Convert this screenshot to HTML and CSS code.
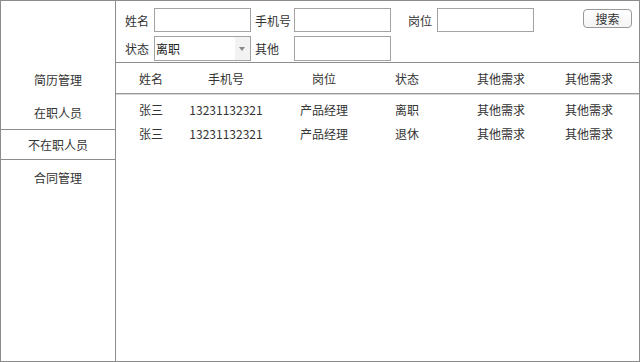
FILE: index.html
```html
<!DOCTYPE html>
<html lang="zh-CN">
<head>
    <meta charset="UTF-8">
    <meta name="viewport" content="width=device-width, initial-scale=1.0">
    <title>不在职人员</title>
    <link rel="stylesheet" href="styles.css">
</head>
<body>

    <div class="app">
        <!-- Side menu -->
        <aside class="sidebar">
            <ul class="menu">
                <li>简历管理</li>
                <li>在职人员</li>
                <li class="active">不在职人员</li>
                <li class="last">合同管理</li>
            </ul>
        </aside>

        <!-- Main area -->
        <main class="content">
            <form class="filters">
                <label class="lbl">姓名</label>
                <input class="field" type="text">
                <label class="lbl lbl-2">手机号</label>
                <input class="field" type="text">
                <label class="lbl lbl-3">岗位</label>
                <input class="field" type="text">
                <button type="button" class="search">搜索</button>

                <label class="lbl">状态</label>
                <div class="select">
                    <span class="select-value">离职</span>
                    <span class="select-arrow"></span>
                </div>
                <label class="lbl lbl-2">其他</label>
                <input class="field" type="text">
            </form>

            <div class="table">
                <div class="row head">
                    <div class="cell">姓名</div>
                    <div class="cell">手机号</div>
                    <div class="cell">岗位</div>
                    <div class="cell">状态</div>
                    <div class="cell">其他需求</div>
                    <div class="cell">其他需求</div>
                </div>
                <div class="rows">
                    <div class="row">
                        <div class="cell">张三</div>
                        <div class="cell">13231132321</div>
                        <div class="cell">产品经理</div>
                        <div class="cell">离职</div>
                        <div class="cell">其他需求</div>
                        <div class="cell">其他需求</div>
                    </div>
                    <div class="row">
                        <div class="cell">张三</div>
                        <div class="cell">13231132321</div>
                        <div class="cell">产品经理</div>
                        <div class="cell">退休</div>
                        <div class="cell">其他需求</div>
                        <div class="cell">其他需求</div>
                    </div>
                </div>
            </div>
        </main>
    </div>

</body>
</html>
```

FILE: styles.css
```css
body {
    margin: 0;
    font-family: "Noto Sans CJK SC", "Liberation Sans", sans-serif;
    font-size: 12px;
    color: #333;
    background: #fff;
}

.app {
    display: flex;
    width: 640px;
    height: 362px;
    box-sizing: border-box;
    border: 1px solid #8c8c8c;
}

/* Side menu */
.sidebar {
    width: 114px;
    border-right: 1px solid #8c8c8c;
}

.menu {
    list-style: none;
    margin: 0;
    padding: 62px 0 0;
}

.menu li {
    height: 33px;
    line-height: 33px;
    text-align: center;
}

.menu li.active {
    height: 29px;
    line-height: 29px;
    border-top: 1px solid #8c8c8c;
    border-bottom: 1px solid #8c8c8c;
}

.menu li.last {
    line-height: 36px;
}

/* Main area */
.content {
    flex: 1;
    display: flex;
    flex-direction: column;
}

.filters {
    height: 62px;
    box-sizing: border-box;
    margin: 0;
    padding: 7px 0 0 9px;
    border-bottom: 1px solid #8c8c8c;
    display: grid;
    grid-template-columns: 29px 97px 43px 97px 46px 97px 49px;
    grid-template-rows: 24px 25px;
    row-gap: 4px;
    align-items: center;
}

.lbl {
    white-space: nowrap;
}

.lbl-2 {
    padding-left: 4px;
}

.lbl-3 {
    padding-left: 17px;
}

.field {
    width: 97px;
    height: 24px;
    box-sizing: border-box;
    margin: 0;
    padding: 0 3px;
    border: 1px solid #a3a3a3;
    background: #fff;
    font: inherit;
}

.filters > .field:last-child {
    height: 25px;
}

.search {
    width: 49px;
    height: 19px;
    margin: 0 0 4px 49px;
    padding: 0;
    border: 1px solid #999;
    border-radius: 4px;
    background: linear-gradient(#fff, #f4f4f4);
    color: #333;
    font: inherit;
    line-height: 17px;
    cursor: pointer;
}

.select {
    display: flex;
    width: 97px;
    height: 25px;
    box-sizing: border-box;
    border: 1px solid #a3a3a3;
    background: #fff;
}

.select-value {
    flex: 1;
    padding-left: 1px;
    line-height: 23px;
    color: #222;
}

.select-arrow {
    width: 15px;
    background: #f2f2f2;
    position: relative;
}

.select-arrow::after {
    content: "";
    position: absolute;
    left: 4px;
    top: 10px;
    border-left: 3px solid transparent;
    border-right: 3px solid transparent;
    border-top: 4px solid #888;
}

/* Table */
.row {
    display: grid;
    grid-template-columns: 70px 80px 116px 50px 138px 38px;
}

.head {
    height: 30px;
    align-items: center;
    border-bottom: 1px solid #999;
    box-shadow: 0 1px 0 #d8d8d8;
}

.rows {
    padding-top: 3px;
}

.rows .row {
    height: 24px;
    align-items: center;
}

.cell {
    display: flex;
    justify-content: center;
    white-space: nowrap;
}
```
